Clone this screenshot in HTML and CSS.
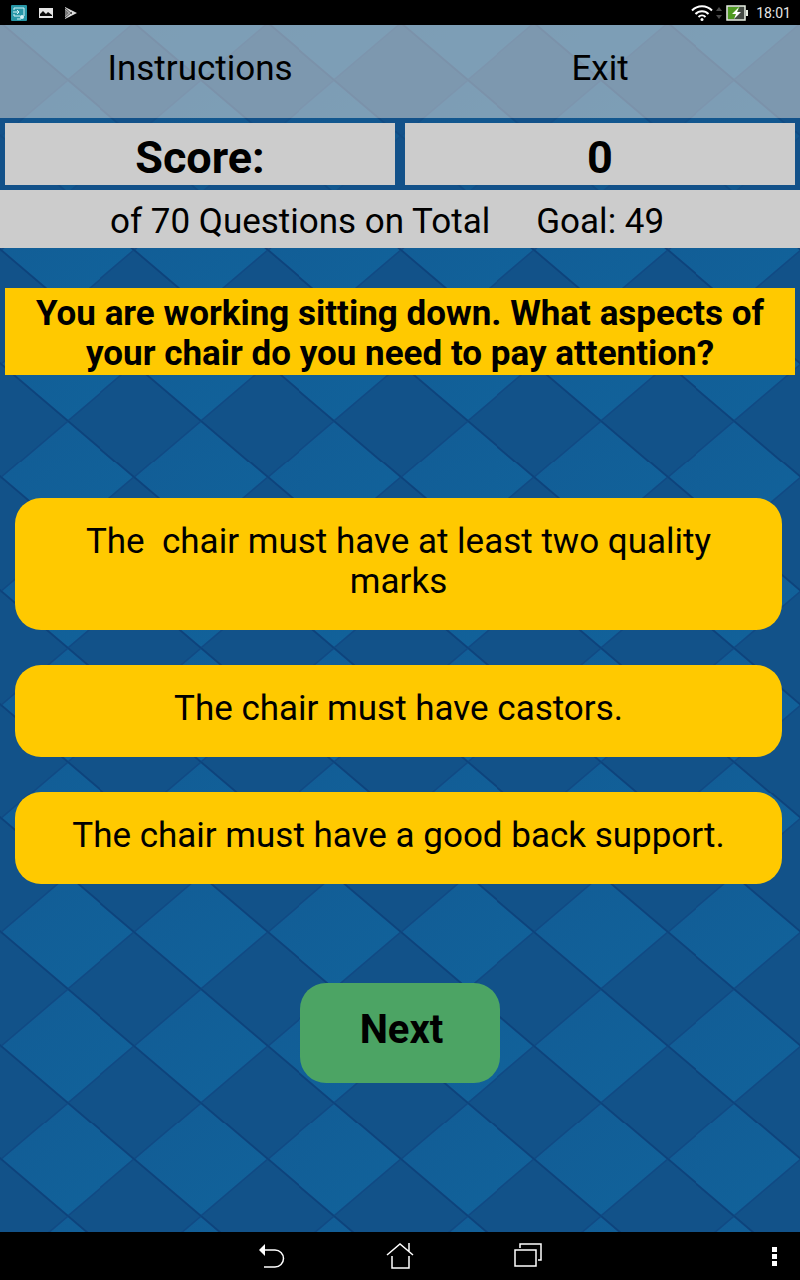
FILE: index.html
```html
<!DOCTYPE html>
<html lang="en">
<head>
  <meta charset="UTF-8">
  <meta name="viewport" content="width=device-width, initial-scale=1">
  <title>Quiz</title>
  <link rel="stylesheet" href="styles.css">
</head>
<body>
  <header class="status-bar">
    <div class="status-left">
      <svg width="18" height="18" viewBox="0 0 18 18">
        <rect x="1" y="1" width="16" height="16" rx="1" fill="#2796a6"/>
        <path d="M4 6V4h10v8M4 10v2h6M3 8h6M7 6l2 2-2 2M7 15h4" fill="none" stroke="#d5f3f6" stroke-width="1"/>
        <circle cx="12" cy="13" r="2" fill="#d5f3f6"/>
      </svg>
      <svg width="16" height="12" viewBox="0 0 16 12">
        <rect x="1" y="1" width="14" height="10" fill="#e4e4e4"/>
        <path d="M2 9V7l3-3 3 3 2-2 4 3v1z" fill="#0a0a0a"/>
      </svg>
      <svg width="14" height="14" viewBox="0 0 14 14">
        <path d="M1 1l12 6-12 6z" fill="#dcdcdc"/>
        <path d="M1 2l7 6M1 12l7-6" stroke="#444" stroke-width="1"/>
        <path d="M1 3l4 4-4 4z" fill="#777"/>
      </svg>
    </div>
    <div class="status-right">
      <svg width="22" height="18" viewBox="0 0 22 18" fill="none" stroke="#fff" stroke-width="2">
        <path d="M1 6.500a14 14 0 0 1 20 0M4.500 10a9 9 0 0 1 13 0M7.500 13a5 5 0 0 1 7 0"/>
        <circle cx="11" cy="15.500" r="1.500" fill="#fff" stroke="none"/>
      </svg>
      <svg width="6" height="14" viewBox="0 0 6 14" fill="#4a4a4a">
        <path d="M0 5l3-4 3 4zM0 9l3 4 3-4z"/>
      </svg>
      <svg class="battery" width="23" height="16" viewBox="0 0 23 16">
        <rect x="1" y="1" width="18" height="14" fill="#454b45" stroke="#e8efe4" stroke-width="1.500"/>
        <path d="M2 2h12L8 14H2z" fill="#4f9a22"/>
        <rect x="20" y="5" width="2" height="6" fill="#e8efe4"/>
        <path d="M13 2L6 9h4l-2 5 7-7h-4z" fill="#fff"/>
      </svg>
      <span>18:01</span>
    </div>
  </header>

  <main class="quiz">
    <nav class="menu">
      <button type="button">Instructions</button>
      <button type="button">Exit</button>
    </nav>

    <div class="score">
      <div>Score:</div>
      <div>0</div>
    </div>

    <div class="goal">
      <span>of 70 Questions on Total</span>
      <span>Goal: 49</span>
    </div>

    <h1 class="question">You are working sitting down. What aspects of your chair do you need to pay attention?</h1>

    <div class="answers">
      <button type="button">The&nbsp; chair must have at least two quality marks</button>
      <button type="button">The chair must have castors.</button>
      <button type="button">The chair must have a good back support.</button>
    </div>

    <button type="button" class="next-btn">Next</button>
  </main>

  <footer class="nav-bar">
    <div class="nav-keys">
      <button type="button" aria-label="Back">
        <svg width="28" height="28" viewBox="0 0 28 28">
          <path d="M7 8h10a8.500 8.500 0 0 1 0 17H6" fill="none" stroke="#fff" stroke-width="1.500"/>
          <path d="M1 8l6-6v12z" fill="#fff"/>
        </svg>
      </button>
      <button type="button" aria-label="Home">
        <svg width="28" height="28" viewBox="0 0 28 28" fill="none" stroke="#fff" stroke-width="1.500">
          <path d="M1 13L14 2l13 11M6 14v12h17V14M23 9V1"/>
        </svg>
      </button>
      <button type="button" aria-label="Recent apps">
        <svg width="28" height="28" viewBox="0 0 28 28" fill="none" stroke="#fff" stroke-width="1.500">
          <path d="M1 8h21v16H1zM6 6V2h21v16h-3"/>
        </svg>
      </button>
    </div>
    <button type="button" class="more-btn" aria-label="More">
      <svg width="6" height="20" viewBox="0 0 6 20" fill="#fff">
        <path d="M1 1h5v5H1zM1 8h5v5H1zM1 15h5v5H1z"/>
      </svg>
    </button>
  </footer>
</body>
</html>
```
FILE: styles.css
```css
* {
  box-sizing: border-box;
}
body {
  margin: 0;
  min-height: 100vh;
  display: flex;
  flex-direction: column;
  background: #000;
  color: #000;
  font-family: Roboto, sans-serif;
}
button {
  border: none;
  padding: 0;
  background: none;
  color: inherit;
  font-family: inherit;
  cursor: pointer;
}
svg {
  display: block;
}

/* status bar */
.status-bar {
  height: 25px;
  padding: 0 9px 0 10px;
  display: flex;
  justify-content: space-between;
  align-items: center;
  color: #e6e6e6;
  font-size: 14px;
}
.status-left {
  display: flex;
  align-items: center;
  gap: 10px;
}
.status-right {
  display: flex;
  align-items: center;
  gap: 3px;
}
.battery {
  margin: 0 4px 0 1px;
}

/* quiz */
.quiz {
  flex: 1;
  display: flex;
  flex-direction: column;
  background-color: #125289;
  background-image: url("data:image/svg+xml,%3Csvg xmlns='http://www.w3.org/2000/svg' viewBox='0 0 400 341'%3E%3ClinearGradient id='g' x2='1' y2='1'%3E%3Cstop stop-color='%23125c95'/%3E%3Cstop offset='1' stop-color='%2311639b'/%3E%3C/linearGradient%3E%3Cpath d='M0 170.500L200 0l200 170.500L200 341z' fill='url(%23g)'/%3E%3Cpath d='M0 170.500L200 0M200 341l200-170.500' stroke='%23104a84' stroke-width='5'/%3E%3Cpath d='M0 170.500L200 341M200 0l200 170.500' stroke='%230d437c' stroke-width='6'/%3E%3C/svg%3E");
  background-size: calc(100% / 6) auto;
  background-position: 1px -59px;
}
.menu {
  display: grid;
  grid-template-columns: 1fr 1fr;
  height: 93px;
  background: rgba(204, 204, 204, 0.58);
}
.menu button {
  padding-bottom: 6px;
  font-size: 35px;
}
.score {
  display: grid;
  grid-template-columns: 1fr 1fr;
  gap: 10px;
  padding: 5px;
  background: rgba(18, 82, 137, 0.6);
}
.score div {
  padding: 12px 0 4px;
  background: #ccc;
  font-size: 45px;
  font-weight: bold;
  line-height: 46px;
  text-align: center;
}
.goal {
  display: flex;
  gap: 46px;
  padding: 12px 110px 6px;
  background: #ccc;
  font-size: 35px;
  line-height: 40px;
  white-space: nowrap;
}
.question {
  margin: 40px 5px 0;
  padding: 6px 20px 1px;
  background: #ffc900;
  font-size: 35px;
  line-height: 40px;
  text-align: center;
}
.answers {
  display: flex;
  flex-direction: column;
  gap: 35px;
  margin: 123px 18px 0 15px;
}
.answers button {
  padding: 24px 50px 28px;
  border-radius: 26px;
  background: #ffc900;
  font-size: 35px;
  line-height: 40px;
}
.next-btn {
  align-self: center;
  width: 200px;
  height: 100px;
  margin: 99px 0 40px;
  padding: 0 0 8px 3px;
  border-radius: 26px;
  background: #4ca464;
  font-size: 40px;
  font-weight: bold;
}

/* navigation keys */
.nav-bar {
  display: grid;
  grid-template-columns: 1fr auto 1fr;
  align-items: center;
  height: 48px;
  padding: 0 23px;
}
.nav-keys {
  grid-column: 2;
  display: flex;
  gap: 100px;
}
.more-btn {
  justify-self: end;
}
```
